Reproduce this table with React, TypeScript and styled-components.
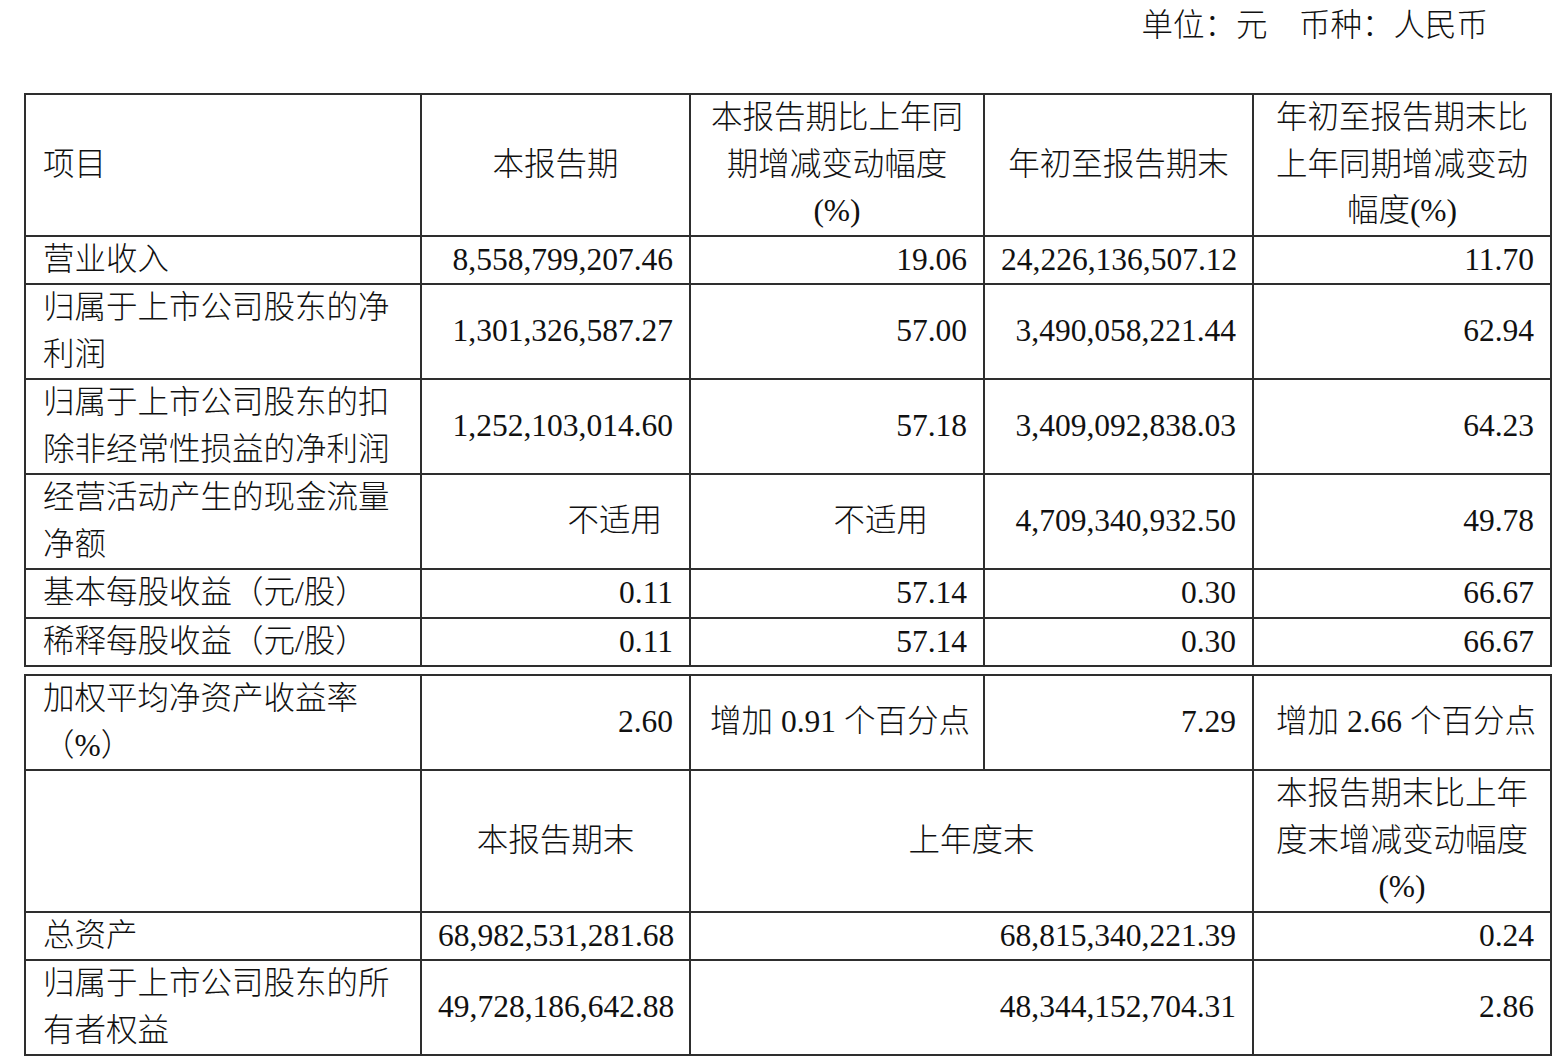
import React from "react";
import styled, { createGlobalStyle } from "styled-components";

const GlobalStyle = createGlobalStyle`
  html, body {
    margin: 0;
    padding: 0;
    background: #fff;
  }
  body {
    font-family: "Liberation Serif", "Noto Sans CJK SC", serif;
    color: #111;
  }
`;

const Page = styled.div`
  width: 1526px;
  padding: 0 11px 0 24px;
`;

const Unit = styled.div`
  height: 48px;
  line-height: 52px;
  font-size: 31.5px;
  text-align: right;
  padding-right: 62px;
  margin-bottom: 45px;
  white-space: pre;
  font-weight: 300;
`;

const Table = styled.table<{ $gap?: boolean }>`
  width: 1526px;
  table-layout: fixed;
  border-collapse: collapse;
  margin-top: ${(p) => (p.$gap ? "7px" : "0")};
  font-size: 31.5px;
  font-weight: 300;
`;

const Cell = styled.td<{ $align?: "left" | "right" | "center"; $pr?: number; $pl?: number }>`
  border: 2px solid #2e2e2e;
  padding: 0 ${(p) => p.$pr ?? 16}px 0 ${(p) => p.$pl ?? (p.$align === "left" ? 17 : 16)}px;
  line-height: 46.5px;
  text-align: ${(p) => p.$align ?? "right"};
  vertical-align: middle;
  white-space: nowrap;
`;

const widths = [396, 269, 294, 269, 298];

const Cols = () => (
  <colgroup>
    {widths.map((w, i) => (
      <col key={i} style={{ width: w }} />
    ))}
  </colgroup>
);

type Row = { label: React.ReactNode; values: [string, string, string, string]; pr?: number[] };

const rows: Row[] = [
  { label: "营业收入", values: ["8,558,799,207.46", "19.06", "24,226,136,507.12", "11.70"] },
  {
    label: (
      <>
        归属于上市公司股东的净
        <br />
        利润
      </>
    ),
    values: ["1,301,326,587.27", "57.00", "3,490,058,221.44", "62.94"],
  },
  {
    label: (
      <>
        归属于上市公司股东的扣
        <br />
        除非经常性损益的净利润
      </>
    ),
    values: ["1,252,103,014.60", "57.18", "3,409,092,838.03", "64.23"],
  },
  {
    label: (
      <>
        经营活动产生的现金流量
        <br />
        净额
      </>
    ),
    values: ["不适用", "不适用", "4,709,340,932.50", "49.78"],
    pr: [27, 55, 16, 16],
  },
  { label: "基本每股收益（元/股）", values: ["0.11", "57.14", "0.30", "66.67"] },
  { label: "稀释每股收益（元/股）", values: ["0.11", "57.14", "0.30", "66.67"] },
];

export default function App() {
  return (
    <Page>
      <GlobalStyle />
      <Unit>{"单位：元    币种：人民币"}</Unit>

      <Table>
        <Cols />
        <tbody>
          <tr>
            <Cell $align="left">项目</Cell>
            <Cell $align="center">本报告期</Cell>
            <Cell $align="center">
              本报告期比上年同
              <br />
              期增减变动幅度
              <br />
              (%)
            </Cell>
            <Cell $align="center">年初至报告期末</Cell>
            <Cell $align="center">
              年初至报告期末比
              <br />
              上年同期增减变动
              <br />
              幅度(%)
            </Cell>
          </tr>
          {rows.map((r, i) => (
            <tr key={i}>
              <Cell $align="left">{r.label}</Cell>
              {r.values.map((v, j) => (
                <Cell key={j} $pr={r.pr ? r.pr[j] : undefined}>
                  {v}
                </Cell>
              ))}
            </tr>
          ))}
        </tbody>
      </Table>

      <Table $gap>
        <Cols />
        <tbody>
          <tr>
            <Cell $align="left">
              加权平均净资产收益率
              <br />
              （%）
            </Cell>
            <Cell>2.60</Cell>
            <Cell $align="left" $pl={19} $pr={8}>
              增加 0.91 个百分点
            </Cell>
            <Cell>7.29</Cell>
            <Cell $align="left" $pl={22} $pr={8}>
              增加 2.66 个百分点
            </Cell>
          </tr>
          <tr>
            <Cell $align="left"></Cell>
            <Cell $align="center">本报告期末</Cell>
            <Cell $align="center" colSpan={2}>
              上年度末
            </Cell>
            <Cell $align="center">
              本报告期末比上年
              <br />
              度末增减变动幅度
              <br />
              (%)
            </Cell>
          </tr>
          <tr>
            <Cell $align="left">总资产</Cell>
            <Cell>68,982,531,281.68</Cell>
            <Cell colSpan={2}>68,815,340,221.39</Cell>
            <Cell>0.24</Cell>
          </tr>
          <tr>
            <Cell $align="left">
              归属于上市公司股东的所
              <br />
              有者权益
            </Cell>
            <Cell>49,728,186,642.88</Cell>
            <Cell colSpan={2}>48,344,152,704.31</Cell>
            <Cell>2.86</Cell>
          </tr>
        </tbody>
      </Table>
    </Page>
  );
}
